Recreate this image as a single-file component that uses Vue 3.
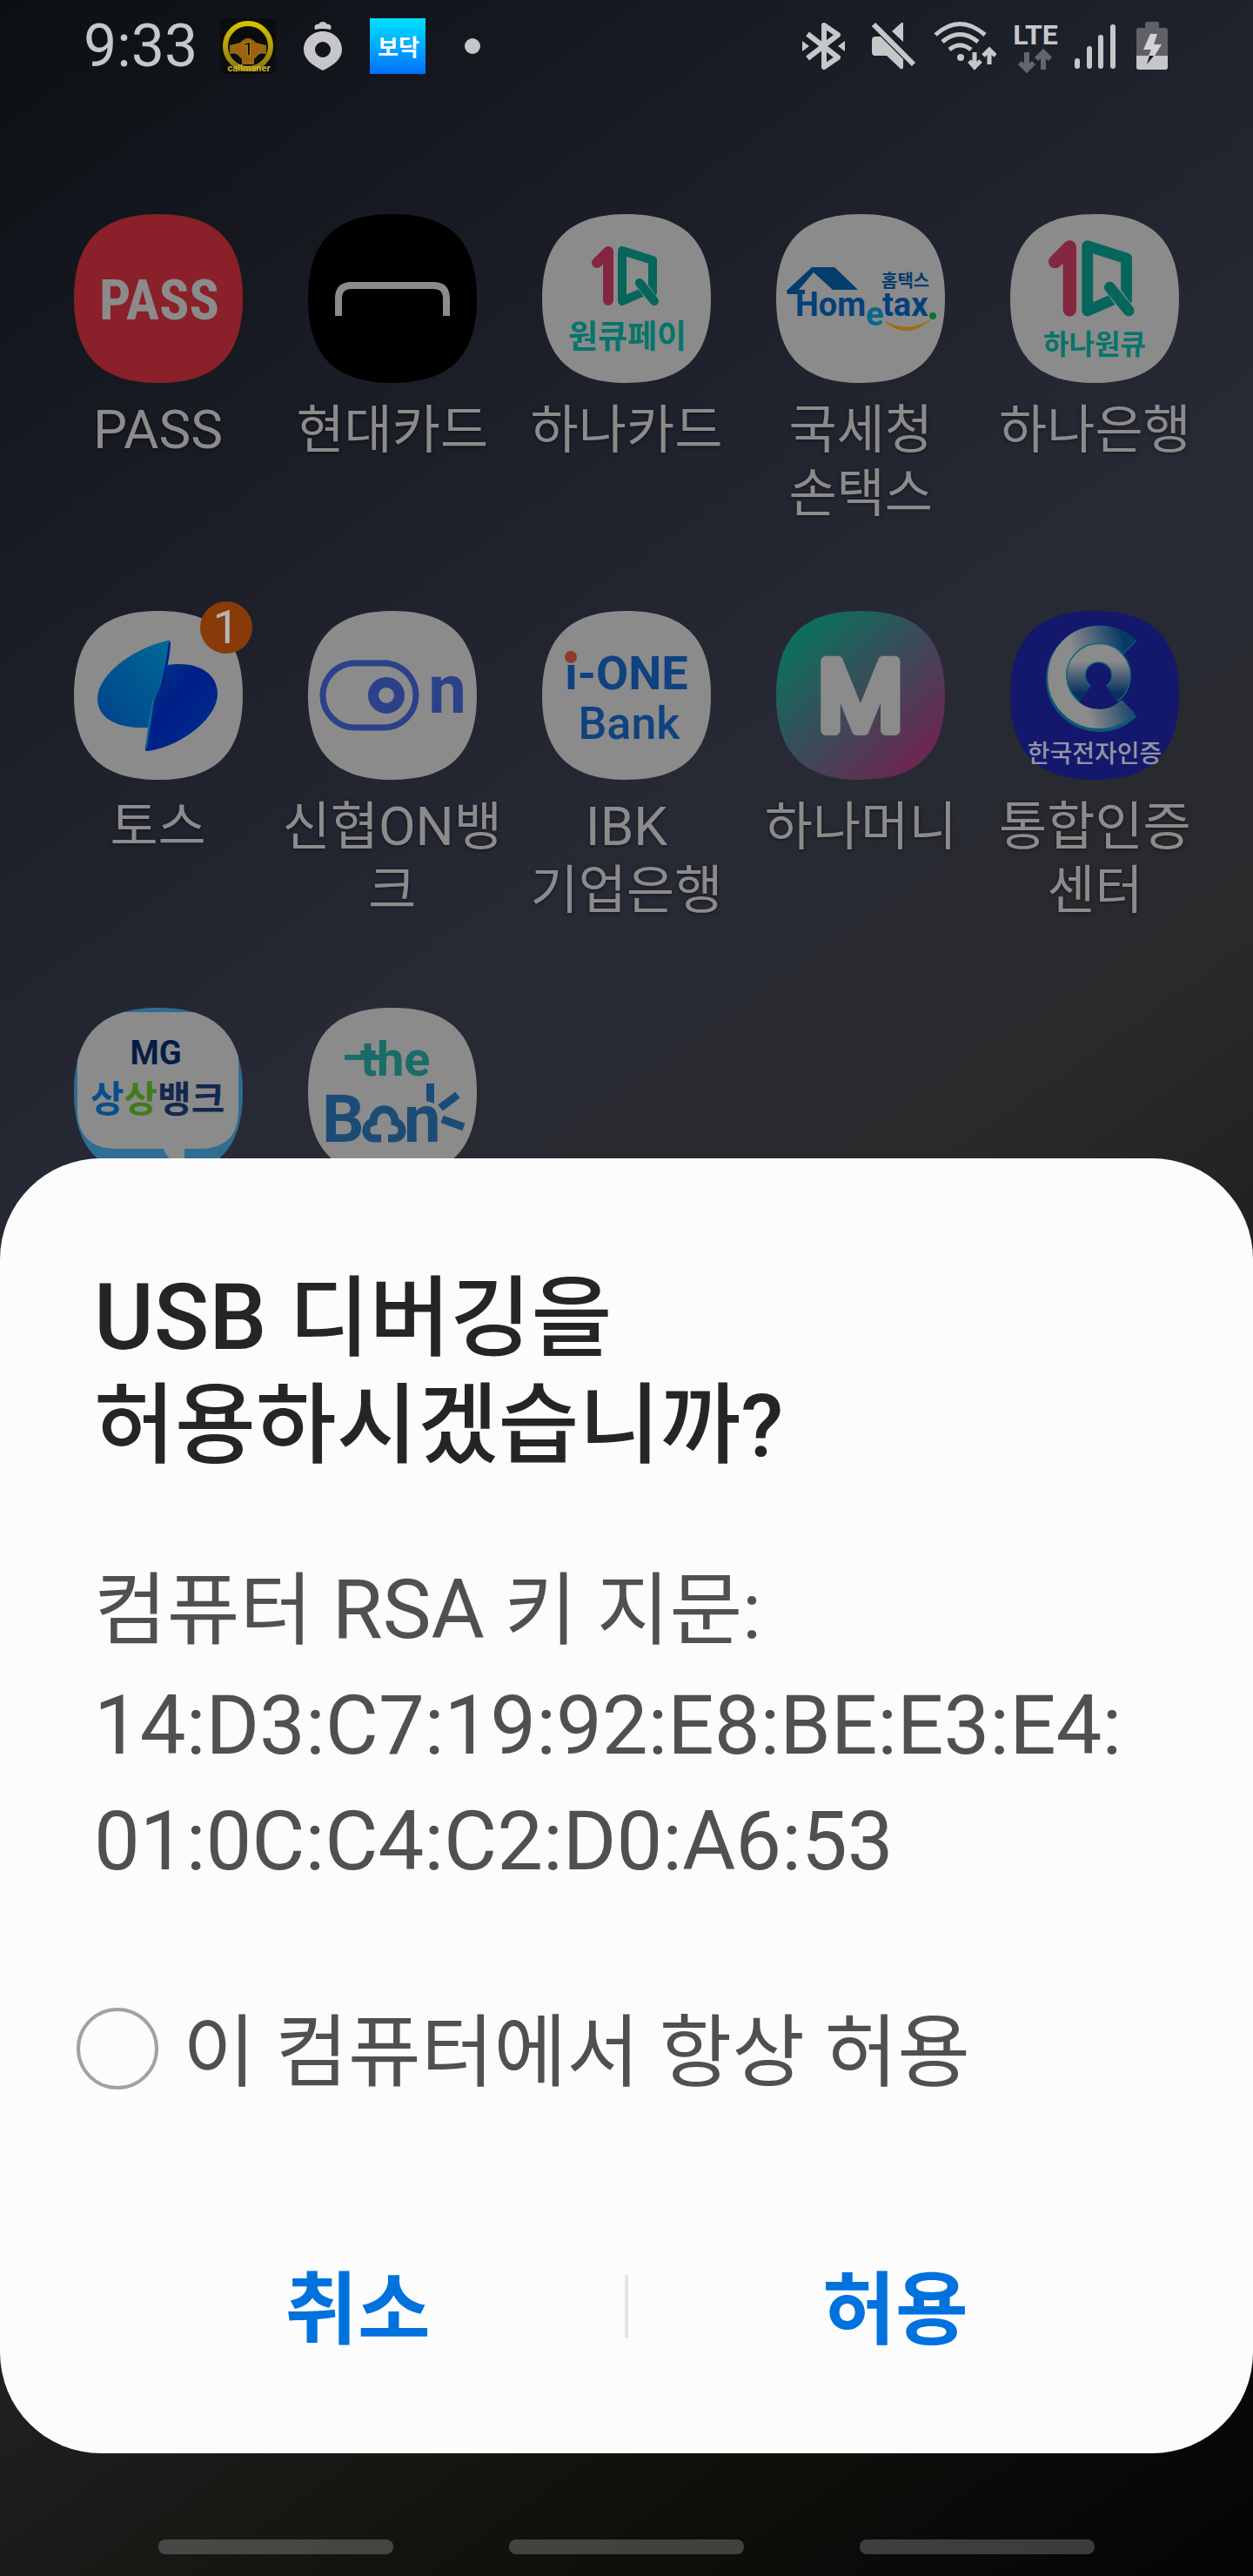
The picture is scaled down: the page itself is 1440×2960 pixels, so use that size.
<template>
    <div class="screen">
        <header class="status-bar">
            <div class="status-left">
                <span class="clock">9:33</span>
                <div class="notifications">
                    <svg width="64" height="64" viewBox="0 0 64 64">
                        <defs>
                            <linearGradient id="wheel" x1="0" y1="0" x2="0" y2="1">
                                <stop offset="0" stop-color="#d8c000" />
                                <stop offset="1" stop-color="#8a7a12" />
                            </linearGradient>
                        </defs>
                        <rect width="64" height="64" rx="6" fill="#0b0c0e" />
                        <circle cx="32" cy="32" r="26" fill="none" stroke="url(#wheel)" stroke-width="6" />
                        <path d="M11 31 23 28Q32 18 41 28L53 31V41Q45 39 42 44L39 47V53H25V47L22 44Q19 39 11 41Z" fill="#9a6412" />
                        <text x="32" y="43" class="wheel-number">1</text>
                        <text x="33" y="61" class="wheel-name">callmaner</text>
                    </svg>
                    <svg width="44" height="64" viewBox="0 0 44 64">
                        <path d="M13 13C11 8 15 6 17 7C19 3 25 3 27 7C29 6 33 8 31 13Q22 11 13 13Z" fill="#c6c7c9" />
                        <path fill-rule="evenodd" d="M22 15C10 15 0 24 0 36C0 47 10 54 22 60C34 54 44 47 44 36C44 24 34 15 22 15ZM22 27A9 9 0 1 1 22 45A9 9 0 1 1 22 27Z" fill="#c6c7c9" />
                    </svg>
                    <svg width="64" height="64" viewBox="0 0 64 64">
                        <defs>
                            <linearGradient id="bodoc" x1="0" y1="0" x2="0" y2="1">
                                <stop offset="0" stop-color="#00e2ff" />
                                <stop offset="1" stop-color="#0070ff" />
                            </linearGradient>
                        </defs>
                        <rect width="64" height="64" fill="url(#bodoc)" />
                        <text x="33" y="43" class="bodoc">보닥</text>
                    </svg>
                    <svg width="46" height="64" viewBox="0 0 46 64">
                        <circle cx="22" cy="32" r="9" fill="#c6c7c9" />
                    </svg>
                </div>
            </div>
            <div class="status-right">
                <svg width="60" height="60" viewBox="0 0 60 60">
                    <path d="M6 16 41 43 25 54V6L41 17 6 44" fill="none" stroke="#c6c7c9" stroke-width="6" stroke-linejoin="round" />
                    <path d="M0 24 8 30 0 36ZM49 24 41 30 49 36Z" fill="#c6c7c9" />
                </svg>
                <svg width="51" height="60" viewBox="0 0 51 60">
                    <path d="M4 19H10L36 45V54Q36 57 33 56L17 41H4Q0 41 0 37V23Q0 19 4 19ZM23 13 33 4Q36 1 36 5V25Z" fill="#c6c7c9" />
                    <path d="M2 5 48 51" stroke="#c6c7c9" stroke-width="6" />
                </svg>
                <svg width="72" height="60" viewBox="0 0 72 60">
                    <path d="M2 17Q30-8 59 17M10 25Q30 8 51 25M18 34Q30 24 43 34" fill="none" stroke="#c6c7c9" stroke-width="5" />
                    <circle cx="31" cy="43" r="4" fill="#c6c7c9" />
                    <path d="M47 37V53M41 47 47 54 54 47M64 51V35M57 41 64 34 71 41" fill="none" stroke="#c6c7c9" stroke-width="5" />
                </svg>
                <svg class="network" width="50" height="60" viewBox="0 0 50 60">
                    <text x="25" y="28" class="lte">LTE</text>
                    <path d="M15 37V56M7 49 15 57 23 49M34 57V38M26 45 34 37 42 45" fill="none" stroke="#64666c" stroke-width="6" />
                </svg>
                <svg width="51" height="60" viewBox="0 0 51 60">
                    <path d="M3 47V53M17 33V53M30 20V53M44 8V53" stroke="#c6c7c9" stroke-width="6" stroke-linecap="round" />
                </svg>
                <svg width="36" height="60" viewBox="0 0 36 60">
                    <path d="M10 9V4Q10 2 12 2H24Q26 2 26 4V9H33Q36 9 36 12V54Q36 57 33 57H3Q0 57 0 54V12Q0 9 3 9Z" fill="#5f6167" />
                    <path d="M0 41H36V54Q36 57 33 57H3Q0 57 0 54Z" fill="#c6c7c9" />
                    <path d="M16 16H24L20 28H29L21 41H14L17 34H8Z" fill="#d2d3d5" />
                    <path d="M15 41H20L12 51Z" fill="#15171c" />
                </svg>
            </div>
        </header>

        <main class="apps">
            <button v-for="app in apps" :key="app.id" type="button" class="app">
                <span class="app-icon">
                    <svg width="194" height="194" viewBox="0 0 194 194">
                        <defs>
                            <clipPath :id="'clip-' + app.id"><path :d="squircle" /></clipPath>
                            <linearGradient v-if="app.id === 'hanamoney'" id="money-fill" x1="0" y1="0" x2="1" y2="1">
                                <stop offset="0.15" stop-color="#0e6e5c" />
                                <stop offset="0.5" stop-color="#3c4a5a" />
                                <stop offset="0.85" stop-color="#6a2852" />
                            </linearGradient>
                        </defs>
                        <path :d="squircle" :fill="app.fill" />

                        <text v-if="app.id === 'pass'" x="98" y="121" class="pass-logo">PASS</text>

                        <path v-else-if="app.id === 'hyundai'" d="M35 117V97Q35 82 50 82H144Q159 82 159 97V117" fill="none" stroke="#8b8b8b" stroke-width="8" />

                        <g v-else-if="app.id === 'hanacard' || app.id === 'hanabank'">
                            <g :transform="app.id === 'hanabank' ? 'translate(-29 -17) scale(1.28)' : null" fill="none" stroke-linecap="round" stroke-linejoin="round">
                                <path d="M63 56 76 43V99" stroke="#852640" stroke-width="12" />
                                <path d="M115 90 92 100V42L127 53V90" stroke="#06655c" stroke-width="10" />
                                <path d="M107 71 131 104" stroke="#8b8b8b" stroke-width="12" stroke-linecap="butt" />
                                <path d="M112 79 129 100" stroke="#06655c" stroke-width="10" />
                            </g>
                            <text v-if="app.id === 'hanacard'" x="98" y="154" class="hana-name">원큐페이</text>
                            <text v-else x="97" y="161" class="hana-name small">하나원큐</text>
                        </g>

                        <g v-else-if="app.id === 'hometax'">
                            <path d="M12 88 41 61H67L94 87H65L43 67 26 87H33V92H13Z" fill="#043c6c" />
                            <text x="22" y="117" class="home-text">Hom</text>
                            <text x="103" y="128" class="home-text e">e</text>
                            <text x="122" y="117" class="home-text">tax</text>
                            <text x="121" y="84" class="home-korean">홈택스</text>
                            <circle cx="180" cy="117" r="4" fill="#10702a" />
                            <path d="M125 123Q150 145 176 122Q150 138 125 123Z" fill="#a06c14" stroke="#a06c14" />
                        </g>

                        <g v-else-if="app.id === 'toss'">
                            <defs>
                                <linearGradient id="toss-a" x1="1" y1="0" x2="0" y2="1">
                                    <stop offset="0" stop-color="#006a94" />
                                    <stop offset="1" stop-color="#00428c" />
                                </linearGradient>
                                <linearGradient id="toss-b" x1="0" y1="0" x2="1" y2="1">
                                    <stop offset="0" stop-color="#003a8c" />
                                    <stop offset="0.4" stop-color="#001e86" />
                                    <stop offset="1" stop-color="#00308c" />
                                </linearGradient>
                            </defs>
                            <path d="M108 62C145 57 165 74 165 95C165 125 120 157 84 161Q81 161 82 157L90 108Z" fill="url(#toss-b)" />
                            <path d="M108 34C70 42 27 72 27 101C27 122 48 136 85 134L90 106L103 80Q110 50 111 36Q111 33 108 34Z" fill="url(#toss-a)" />
                            <path d="M111 36Q110 55 103 84L99 90Q107 55 109 36Z" fill="#001e86" />
                            <path d="M85 134 90 108 92 104 84 158 82 158Z" fill="#006a94" />
                        </g>

                        <g v-else-if="app.id === 'shinhyup'" fill="none" stroke="#2c418a">
                            <rect x="17" y="60" width="107" height="74" rx="37" stroke-width="7" />
                            <circle cx="90" cy="97" r="15" stroke-width="12" />
                            <text x="160" y="117" class="on-letter">n</text>
                        </g>

                        <g v-else-if="app.id === 'ibk'">
                            <text x="97" y="90" class="ibk-one">i-ONE</text>
                            <rect x="24" y="44" width="16" height="16" fill="#8b8b8b" />
                            <circle cx="33" cy="53" r="7" fill="#8e3a2a" />
                            <text x="100" y="147" class="ibk-bank">Bank</text>
                        </g>

                        <text v-else-if="app.id === 'hanamoney'" x="97" y="137" class="money">M</text>

                        <g v-else-if="app.id === 'cert'">
                            <defs>
                                <linearGradient id="cert-a" x1="0" y1="0.6" x2="1" y2="0.3">
                                    <stop offset="0.3" stop-color="#8b8b8b" />
                                    <stop offset="1" stop-color="#063a66" />
                                </linearGradient>
                                <linearGradient id="cert-b" x1="0" y1="0" x2="0" y2="1">
                                    <stop offset="0.2" stop-color="#8b8b8b" />
                                    <stop offset="1" stop-color="#06305e" />
                                </linearGradient>
                            </defs>
                            <path d="M136 44A48 48 0 1 0 136 112" fill="none" stroke="#0a5a74" stroke-width="26" />
                            <path d="M136 42A48 48 0 1 0 136 110" fill="none" stroke="url(#cert-a)" stroke-width="22" />
                            <path d="M86 95A26 26 0 1 1 117 95" fill="none" stroke="#0a6a74" stroke-width="23" />
                            <path d="M86 95A26 26 0 1 1 117 95" fill="none" stroke="url(#cert-b)" stroke-width="20" />
                            <text x="97" y="174" class="cert-name">한국전자인증</text>
                        </g>

                        <g v-else-if="app.id === 'mg'" clip-path="url(#clip-mg)">
                            <path d="M49 5H144Q189 5 189 50V117Q189 162 144 162H127V180Q108 178 103 162H49Q4 162 4 117V50Q4 5 49 5Z" fill="#8b8b8b" />
                            <text x="94" y="65" class="mg-latin">MG</text>
                            <text x="96" y="120" class="mg-name"><tspan fill="#064e8c">상</tspan><tspan fill="#3f7d1a">상</tspan><tspan fill="#12284e">뱅크</tspan></text>
                        </g>

                        <g v-else-if="app.id === 'thebank'">
                            <text x="60" y="78" class="the">the</text>
                            <path d="M42 57H90" stroke="#1a6c68" stroke-width="6" />
                            <text x="16" y="154" class="bank">B</text>
                            <path d="M84 150H76C64 150 64 133 75 131C75 112 100 112 100 131C110 133 112 150 98 150H92" fill="none" stroke="#1c4c76" stroke-width="9" />
                            <text x="110" y="154" class="bank">n</text>
                            <path d="M136 87H145V110L136 107Z" fill="#1c4c76" />
                            <path d="M152 115 172 100M154 128 179 137" stroke="#1c4c76" stroke-width="9" />
                        </g>
                    </svg>
                    <span v-if="app.badge" class="badge">{{ app.badge }}</span>
                </span>
                <span v-if="app.label" class="app-label">
                    <span v-for="line in app.label" :key="line" class="label-line">
                        <span v-for="run in runs(line)" :key="run" :class="{ latin: isLatin(run) }">{{ run }}</span>
                    </span>
                </span>
            </button>
        </main>

        <section class="dialog" role="dialog" aria-labelledby="dialog-title">
            <h1 id="dialog-title"><span class="latin">USB</span> 디버깅을<br>허용하시겠습니까?</h1>
            <p class="message">
                컴퓨터 <span class="latin">RSA</span> 키 지문:<br>
                <span class="latin">{{ fingerprint }}</span>
            </p>
            <div class="always">
                <input id="always-allow" v-model="alwaysAllow" type="checkbox">
                <label for="always-allow">이 컴퓨터에서 항상 허용</label>
            </div>
            <div class="actions">
                <button type="button">취소</button>
                <span class="divider"></span>
                <button type="button">허용</button>
            </div>
        </section>

        <nav class="nav-bar">
            <span v-for="n in 3" :key="n" class="nav-hint"></span>
        </nav>
    </div>
</template>

<script setup>
    import { ref } from 'vue'

    const alwaysAllow = ref(false)
    const fingerprint = "14:D3:C7:19:92:E8:BE:E3:E4:\n01:0C:C4:C2:D0:A6:53"

    /* ------- HOME SCREEN ------- */

    const squircle = "M97 0C31 0 0 31 0 97S31 194 97 194 194 163 194 97 163 0 97 0Z"
    const grey = "#8b8b8b"

    const apps = [
        { id: "pass", label: ["PASS"], fill: "#8a2029" },
        { id: "hyundai", label: ["현대카드"], fill: "#000000" },
        { id: "hanacard", label: ["하나카드"], fill: grey },
        { id: "hometax", label: ["국세청", "손택스"], fill: grey },
        { id: "hanabank", label: ["하나은행"], fill: grey },
        { id: "toss", label: ["토스"], fill: grey, badge: 1 },
        { id: "shinhyup", label: ["신협ON뱅", "크"], fill: grey },
        { id: "ibk", label: ["IBK", "기업은행"], fill: grey },
        { id: "hanamoney", label: ["하나머니"], fill: "url(#money-fill)" },
        { id: "cert", label: ["통합인증", "센터"], fill: "#14186c" },
        { id: "mg", fill: "#2f6d92" },
        { id: "thebank", fill: grey }
    ]

    // latin letters are set a little larger than hangul
    function runs(line) {
        return line.split(/([A-Z]+)/).filter(run => run)
    }

    function isLatin(run) {
        return /^[A-Z]+$/.test(run)
    }
</script>

<style>
body {
    background: #0c0f13;
}
</style>

<style scoped>

.screen {
    position: relative;
    display: flex;
    flex-direction: column;
    min-height: 100vh;
    overflow: hidden;
    font-family: Roboto, "Noto Sans CJK KR", sans-serif;
    background: linear-gradient(145deg, #0c0f13 0%, #1f222c 25%, #272a35 37%, #2a2a2c 52%, #212321 60%, #1f201e 70%, #11110d 84%, #040404 100%);
}

button {
    padding: 0;
    border: none;
    background: none;
    font-family: inherit;
}

svg {
    display: block;
}

/* STATUS BAR */

.status-bar {
    display: flex;
    justify-content: space-between;
    align-items: center;
    height: 106px;
    padding: 0 98px 0 96px;
}

.status-left {
    display: flex;
    align-items: center;
    gap: 26px;
}

.notifications {
    display: flex;
    align-items: center;
    gap: 32px;
}

.status-right {
    display: flex;
    align-items: center;
    gap: 20px;
}

.clock {
    font-size: 68px;
    line-height: 80px;
    color: #c6c7c9;
}

text {
    text-anchor: middle;
    font-weight: 700;
}

.wheel-number {
    font-size: 22px;
    fill: #000000;
    stroke: #b89010;
    stroke-width: 1px;
}

.wheel-name {
    font-size: 11px;
    fill: #cdb52c;
}

.bodoc {
    font-size: 26px;
    fill: #ffffff;
}

.network {
    overflow: visible;
}

.lte {
    font-size: 32px;
    fill: #c6c7c9;
}

/* APP GRID */

.apps {
    flex: 1;
    display: grid;
    grid-template-columns: repeat(5, 1fr);
    grid-auto-rows: 456px;
    padding: 140px 47px 0;
}

.app {
    display: flex;
    flex-direction: column;
    align-items: center;
    gap: 18px;
}

.app-icon {
    position: relative;
}

.badge {
    position: absolute;
    top: -11px;
    right: -11px;
    width: 60px;
    height: 60px;
    border-radius: 50%;
    font-size: 54px;
    line-height: 60px;
    text-align: center;
    color: #b4b4b4;
    background: #883a08;
}

.app-label {
    font-size: 60px;
    line-height: 73px;
    text-align: center;
    white-space: nowrap;
    color: #8b8b8b;
    text-shadow: 0 1px 4px rgba(0, 0, 0, 0.5);
}

.label-line {
    display: block;
}

.app-label .latin {
    font-size: 62px;
    line-height: 1;
}

/* ICON LETTERING */

.pass-logo {
    font-family: "Roboto Condensed", "Liberation Sans Narrow", "Open Sans Condensed", Roboto, sans-serif;
    font-size: 64px;
    fill: #8b8b8b;
}

.hana-name {
    font-size: 37px;
    fill: #06756a;
}

.hana-name.small {
    font-size: 32px;
}

.home-text {
    font-size: 38px;
    text-anchor: start;
    fill: #04407a;
}

.home-text.e {
    fill: #04688c;
}

.home-korean {
    font-size: 20px;
    text-anchor: start;
    fill: #043c6c;
}

.on-letter {
    font-size: 78px;
    fill: #2c418a;
    stroke: none;
}

.ibk-one {
    font-size: 54px;
    fill: #10427f;
}

.ibk-bank {
    font-size: 52px;
    font-weight: 500;
    fill: #10427f;
}

.money {
    font-size: 112px;
    font-weight: 400;
    fill: #8b8b8b;
    stroke: #8b8b8b;
    stroke-width: 12px;
    stroke-linejoin: round;
}

.cert-name {
    font-size: 28px;
    font-weight: 500;
    fill: #9494a4;
}

.mg-latin {
    font-size: 38px;
    fill: #041e46;
}

.mg-name {
    font-size: 42px;
}

.the {
    font-size: 56px;
    text-anchor: start;
    fill: #1a6c68;
}

.bank {
    font-size: 76px;
    text-anchor: start;
    fill: #1c4c76;
}

/* DIALOG */

.dialog {
    position: absolute;
    right: 0;
    bottom: 141px;
    left: 0;
    padding: 123px 104px 98px;
    box-sizing: border-box;
    border-radius: 116px;
    background: #fcfcfc;
}

h1 {
    margin: 0 4px;
    font-size: 101px;
    font-weight: 500;
    line-height: 123px;
    color: #252525;
}

h1 .latin {
    font-size: 105px;
    line-height: 1;
}

.message {
    margin: 84px 4px 0;
    font-size: 91px;
    line-height: 132px;
    color: #505050;
}

.message .latin {
    font-size: 94px;
    white-space: pre-line;
}

.always {
    display: flex;
    align-items: center;
    gap: 28px;
    margin: 110px 0 0 -16px;
    font-size: 91px;
    line-height: 132px;
    color: #505050;
}

.always input {
    appearance: none;
    flex: none;
    width: 94px;
    height: 94px;
    margin: 0 0 10px;
    border: 4px solid #a2a2a2;
    border-radius: 50%;
}

.always input:checked {
    background: #0072de;
}

.actions {
    display: flex;
    align-items: center;
    margin-top: 164px;
}

.actions button {
    flex: 1;
    font-size: 91px;
    font-weight: 700;
    line-height: 132px;
    color: #0072de;
}

.divider {
    width: 4px;
    height: 72px;
    margin-bottom: 10px;
    background: #e4e4e4;
}

/* NAVIGATION HINTS */

.nav-bar {
    display: flex;
    justify-content: space-between;
    padding: 0 182px 25px;
}

.nav-hint {
    width: 270px;
    height: 17px;
    border-radius: 8px;
    background: rgba(255, 255, 255, 0.21);
}

</style>
